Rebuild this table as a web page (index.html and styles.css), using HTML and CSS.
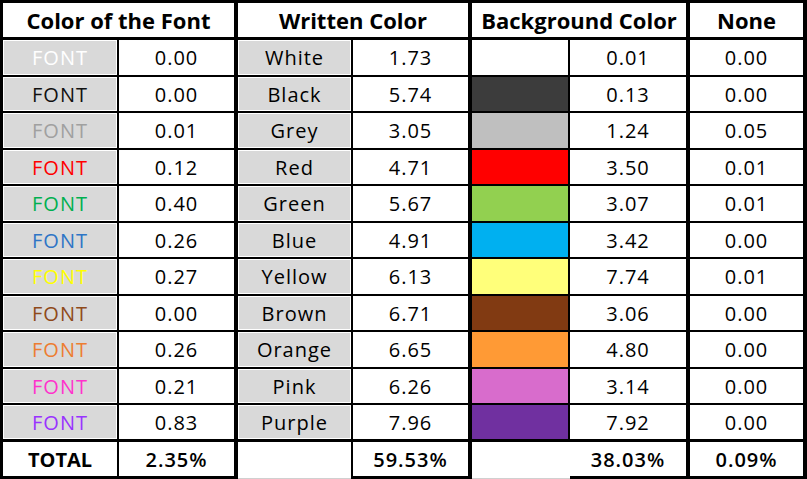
FILE: index.html
```html
<!DOCTYPE html>
<html>
<head>
<meta charset="utf-8">
<link rel="stylesheet" href="styles.css">
</head>
<body>
<div class="sheet">
  <div class="cell hd k span2">Color of the Font</div>
  <div class="cell hd k span2">Written Color</div>
  <div class="cell hd k span2">Background Color</div>
  <div class="cell hd k">None</div>

  <div class="cell g f-white">FONT</div><div class="cell k">0.00</div><div class="cell g">White</div><div class="cell k">1.73</div><div class="cell sw-white"></div><div class="cell k">0.01</div><div class="cell k">0.00</div>
  <div class="cell g f-black">FONT</div><div class="cell k">0.00</div><div class="cell g">Black</div><div class="cell k">5.74</div><div class="cell sw-black"></div><div class="cell k">0.13</div><div class="cell k">0.00</div>
  <div class="cell g f-grey">FONT</div><div class="cell k">0.01</div><div class="cell g">Grey</div><div class="cell k">3.05</div><div class="cell sw-grey"></div><div class="cell k">1.24</div><div class="cell k">0.05</div>
  <div class="cell g f-red">FONT</div><div class="cell k">0.12</div><div class="cell g">Red</div><div class="cell k">4.71</div><div class="cell sw-red"></div><div class="cell k">3.50</div><div class="cell k">0.01</div>
  <div class="cell g f-green">FONT</div><div class="cell k">0.40</div><div class="cell g">Green</div><div class="cell k">5.67</div><div class="cell sw-green"></div><div class="cell k">3.07</div><div class="cell k">0.01</div>
  <div class="cell g f-blue">FONT</div><div class="cell k">0.26</div><div class="cell g">Blue</div><div class="cell k">4.91</div><div class="cell sw-blue"></div><div class="cell k">3.42</div><div class="cell k">0.00</div>
  <div class="cell g f-yellow">FONT</div><div class="cell k">0.27</div><div class="cell g">Yellow</div><div class="cell k">6.13</div><div class="cell sw-yellow"></div><div class="cell k">7.74</div><div class="cell k">0.01</div>
  <div class="cell g f-brown">FONT</div><div class="cell k">0.00</div><div class="cell g">Brown</div><div class="cell k">6.71</div><div class="cell sw-brown"></div><div class="cell k">3.06</div><div class="cell k">0.00</div>
  <div class="cell g f-orange">FONT</div><div class="cell k">0.26</div><div class="cell g">Orange</div><div class="cell k">6.65</div><div class="cell sw-orange"></div><div class="cell k">4.80</div><div class="cell k">0.00</div>
  <div class="cell g f-pink">FONT</div><div class="cell k">0.21</div><div class="cell g">Pink</div><div class="cell k">6.26</div><div class="cell sw-pink"></div><div class="cell k">3.14</div><div class="cell k">0.00</div>
  <div class="cell g f-purple end">FONT</div><div class="cell k end">0.83</div><div class="cell g end">Purple</div><div class="cell k end">7.96</div><div class="cell sw-purple end"></div><div class="cell k end">7.92</div><div class="cell k end">0.00</div>

  <div class="cell tot strong">TOTAL</div><div class="cell tot k">2.35%</div><div class="cell blank"></div><div class="cell tot k lk">59.53%</div><div class="cell blank"></div><div class="cell tot k">38.03%</div><div class="cell tot k">0.09%</div>
</div>
</body>
</html>
```

FILE: styles.css
```css
html, body {
  margin: 0;
  padding: 0;
  background: #ffffff;
}

.sheet {
  display: grid;
  grid-template-columns: 116px 119px 115px 119px 98px 120px 117px;
  grid-template-rows: 37px 37px 36px 37px 36px 37px 36px 37px 36px 37px 36px 37px 37px;
  width: 807px;
  height: 479px;
  box-sizing: border-box;
  border-top: 3px solid #000;
  border-left: 3px solid #000;
  font-family: "Open Sans", "Liberation Sans", sans-serif;
  font-size: 20px;
  letter-spacing: 1px;
  color: #000;
}

.cell {
  box-sizing: border-box;
  border-right: 2px solid #000;
  border-bottom: 2px solid #000;
  display: flex;
  align-items: center;
  justify-content: center;
  background: #fff;
  white-space: nowrap;
}

.k { border-right-width: 4px; }
.span2 { grid-column: span 2; }

.hd {
  border-bottom-width: 3px;
  font-weight: 700;
  font-size: 22px;
  letter-spacing: 0;
  color: #000;
}

.end { border-bottom-width: 3px; }

.g {
  background: #d9d9d9;
  box-shadow: inset 0 0 0 1px #fff;
}

.tot {
  border-bottom-width: 3px;
  font-weight: 600;
  color: #000;
}
.strong { font-weight: 700; letter-spacing: 0; }
.lk { box-shadow: -2px 0 0 #000; }

.blank {
  border-right: none;
  border-bottom: 1px solid #d0d0d0;
}

.f-white { color: #ffffff; }
.f-black { color: #111111; }
.f-grey { color: #a0a0a0; }
.f-red { color: #ff0000; }
.f-green { color: #00b050; }
.f-blue { color: #2e75c6; }
.f-yellow { color: #ffff00; }
.f-brown { color: #8f4a1a; }
.f-orange { color: #ed7d31; }
.f-pink { color: #ff33cc; }
.f-purple { color: #9933ff; }

.sw-white { background: #ffffff; }
.sw-black { background: #3c3c3c; }
.sw-grey { background: #bfbfbf; }
.sw-red { background: #ff0000; }
.sw-green { background: #92d050; }
.sw-blue { background: #00b0f0; }
.sw-yellow { background: #ffff7a; }
.sw-brown { background: #813a12; }
.sw-orange { background: #ff9a35; }
.sw-pink { background: #d86ccc; }
.sw-purple { background: #7030a0; }
```
